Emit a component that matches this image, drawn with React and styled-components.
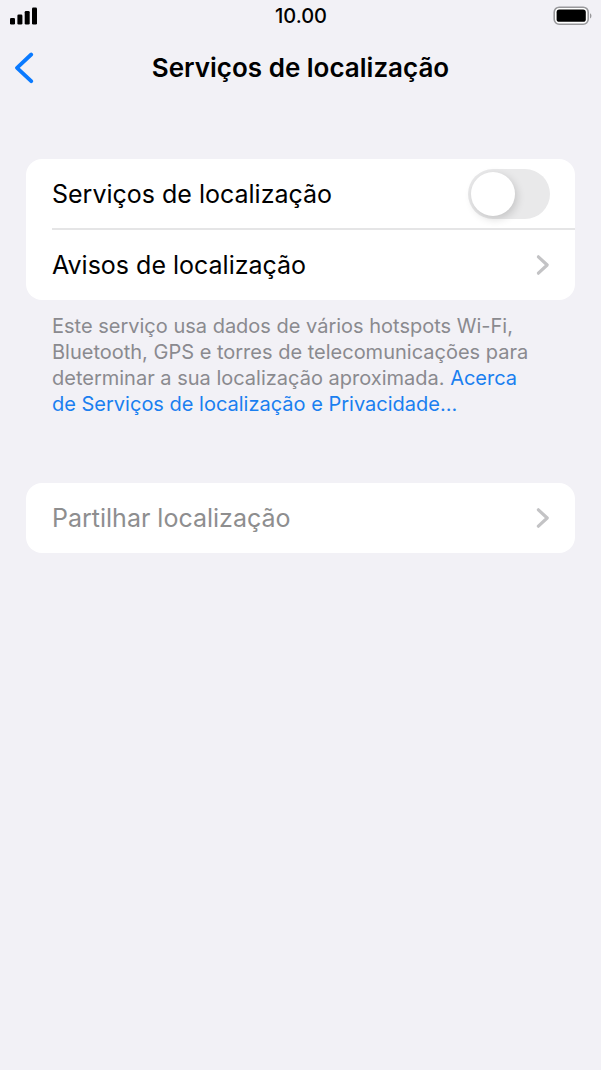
import { useState } from "react";
import { createGlobalStyle, styled } from "styled-components";

const GlobalStyle = createGlobalStyle`
  * {
    box-sizing: border-box;
  }
  body {
    margin: 0;
    background: #f2f1f6;
    color: #000;
    font-family: Inter, "Liberation Sans", sans-serif;
  }
`;

const StatusBar = styled.div`
  display: grid;
  grid-template-columns: 1fr auto 1fr;
  align-items: center;
  height: 32px;
  padding: 0 9px 0 10px;

  > svg:last-child {
    justify-self: end;
  }
`;

const Time = styled.time`
  font-size: 20px;
  font-weight: 500;
  line-height: 32px;
`;

const NavBar = styled.header`
  display: grid;
  grid-template-columns: 40px 1fr 40px;
  align-items: center;
  height: 72px;
  padding: 0 8px;
`;

const BackButton = styled.button`
  display: flex;
  align-items: center;
  height: 40px;
  padding: 0 6px;
  border: none;
  background: none;
  color: #0a7aff;
  cursor: pointer;
`;

const Title = styled.h1`
  margin: 0;
  font-size: 26px;
  font-weight: 600;
  line-height: 32px;
  text-align: center;
`;

const Content = styled.main`
  padding: 55px 26px 40px;
`;

const Card = styled.section`
  border-radius: 16px;
  background: #fff;
  overflow: hidden;
`;

const RowItem = styled.div`
  margin-left: 26px;

  & + & {
    border-top: 2px solid #e5e5e6;
  }
`;

const Row = styled.div`
  display: flex;
  justify-content: space-between;
  align-items: center;
  width: 100%;
  height: 70px;
  padding: 0 25px 0 0;
  border: none;
  background: none;
  color: ${({ disabled }) => (disabled ? "#8e8e8f" : "#000")};
  font-family: inherit;
  font-size: 25px;
  line-height: 32px;
  text-align: left;
`;

const SwitchRow = styled(Row)`
  height: 69px;
`;

const Switch = styled.input`
  appearance: none;
  flex: none;
  display: flex;
  width: 82px;
  height: 50px;
  margin: 0;
  padding: 3px;
  border-radius: 25px;
  background: ${({ checked }) => (checked ? "#34c759" : "#e9e9ea")};
  cursor: pointer;

  &::before {
    content: "";
    width: 44px;
    height: 44px;
    margin-left: ${({ checked }) => (checked ? "32px" : "0")};
    border-radius: 50%;
    background: #fff;
    box-shadow: 2px 3px 8px rgba(0, 0, 0, 0.16);
  }
`;

const Note = styled.p`
  margin: 0;
  padding: 13px 40px 66px 26px;
  color: #8a8a8f;
  font-size: 20px;
  line-height: 26px;

  > a {
    color: #1a7ff0;
    text-decoration: none;
  }
`;

const SignalIcon = () => (
  <svg width="28" height="18" viewBox="0 0 28 18" aria-hidden="true">
    <rect x="0" y="11" width="5" height="6.5" rx="1.3" />
    <rect x="7.4" y="7.5" width="5" height="10" rx="1.3" />
    <rect x="14.7" y="4" width="5" height="13.5" rx="1.3" />
    <rect x="22" y="0.5" width="5" height="17" rx="1.3" />
  </svg>
);

const BatteryIcon = () => (
  <svg width="39" height="20" viewBox="0 0 39 20" aria-hidden="true">
    <rect
      x="1.2"
      y="1.2"
      width="34"
      height="17"
      rx="5"
      fill="#fff"
      stroke="#98989b"
      strokeWidth="1.6"
    />
    <rect x="3.6" y="3.6" width="29.2" height="12.2" rx="2.6" />
    <path d="M37 7.2c1.9.8 1.9 4.4 0 5.2z" fill="#98989b" />
  </svg>
);

const BackIcon = () => (
  <svg width="20" height="32" viewBox="0 0 20 32" fill="none" aria-hidden="true">
    <path
      d="M17.2 2.5 3 15.8l14.2 13.4"
      stroke="currentColor"
      strokeWidth="3.8"
      strokeLinecap="round"
      strokeLinejoin="round"
    />
  </svg>
);

const ChevronIcon = () => (
  <svg width="14" height="22" viewBox="0 0 14 22" fill="none" aria-hidden="true">
    <path
      d="M2.4 2.8 11.2 11l-8.8 8.2"
      stroke="#c3c3c5"
      strokeWidth="3.2"
      strokeLinecap="round"
      strokeLinejoin="round"
    />
  </svg>
);

const App = () => {
  const [enabled, setEnabled] = useState(false);

  return (
    <>
      <GlobalStyle />
      <StatusBar>
        <SignalIcon />
        <Time>10.00</Time>
        <BatteryIcon />
      </StatusBar>
      <NavBar>
        <BackButton type="button" aria-label="Voltar">
          <BackIcon />
        </BackButton>
        <Title>Serviços de localização</Title>
      </NavBar>
      <Content>
        <Card>
          <RowItem>
            <SwitchRow as="label" htmlFor="location">
              Serviços de localização
              <Switch
                id="location"
                type="checkbox"
                role="switch"
                checked={enabled}
                onChange={(e) => setEnabled(e.target.checked)}
              />
            </SwitchRow>
          </RowItem>
          <RowItem>
            <Row as="button" type="button">
              Avisos de localização
              <ChevronIcon />
            </Row>
          </RowItem>
        </Card>
        <Note>
          Este serviço usa dados de vários hotspots Wi-Fi, Bluetooth, GPS e
          torres de telecomunicações para determinar a sua localização
          aproximada.{" "}
          <a href="#privacidade">
            Acerca de Serviços de localização e Privacidade...
          </a>
        </Note>
        <Card>
          <RowItem>
            <Row as="button" type="button" disabled>
              Partilhar localização
              <ChevronIcon />
            </Row>
          </RowItem>
        </Card>
      </Content>
    </>
  );
};

export default App;
